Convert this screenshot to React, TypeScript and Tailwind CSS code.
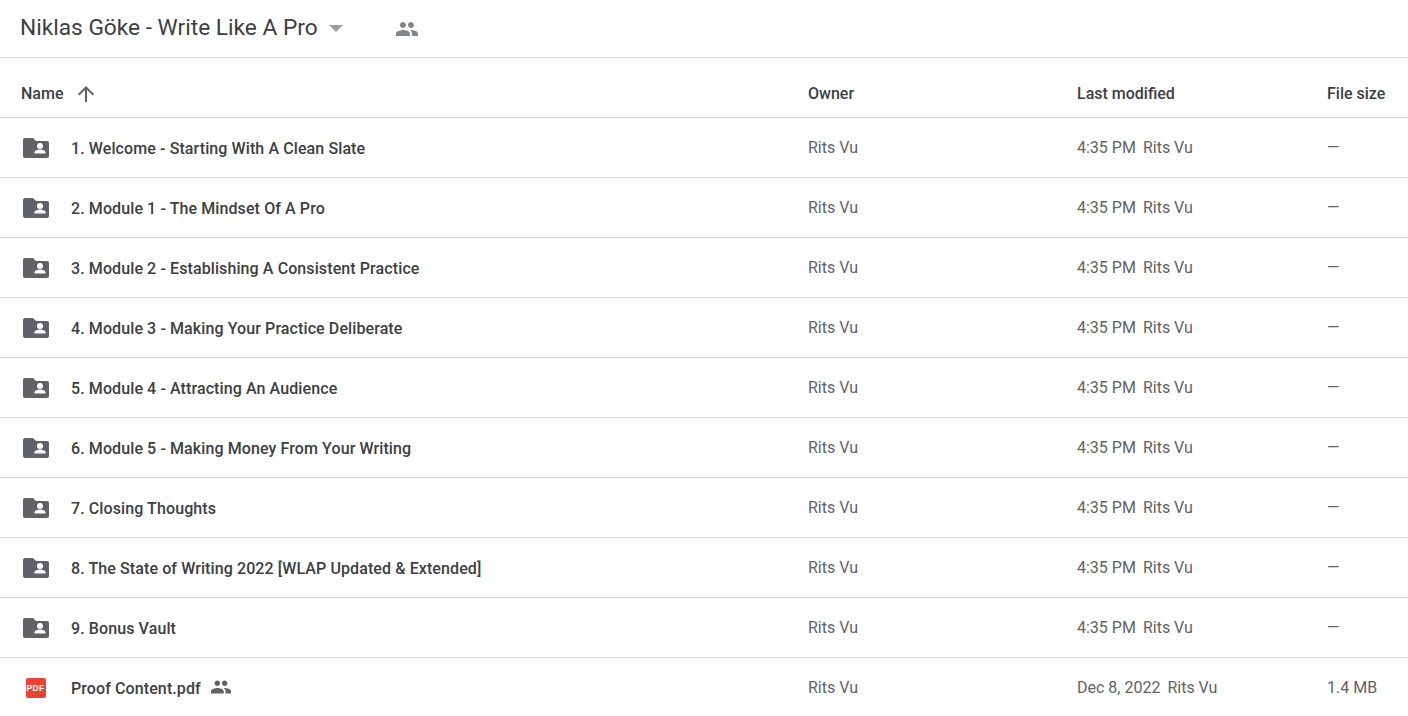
const FOLDERS = [
  '1. Welcome - Starting With A Clean Slate',
  '2. Module 1 - The Mindset Of A Pro',
  '3. Module 2 - Establishing A Consistent Practice',
  '4. Module 3 - Making Your Practice Deliberate',
  '5. Module 4 - Attracting An Audience',
  '6. Module 5 - Making Money From Your Writing',
  '7. Closing Thoughts',
  '8. The State of Writing 2022 [WLAP Updated & Extended]',
  '9. Bonus Vault',
]

const PEOPLE =
  'M16 11c1.66 0 2.99-1.34 2.99-3S17.66 5 16 5c-1.66 0-3 1.34-3 3s1.34 3 3 3zm-8 0c1.66 0 2.99-1.34 2.99-3S9.66 5 8 5C6.34 5 5 6.34 5 8s1.34 3 3 3zm0 2c-2.33 0-7 1.17-7 3.5V19h14v-2.5c0-2.33-4.67-3.5-7-3.5zm8 0c-.29 0-.62.02-.97.05 1.16.84 1.97 1.97 1.97 3.45V19h6v-2.5c0-2.33-4.67-3.5-7-3.5z'

function PeopleIcon({ className }: { className: string }) {
  return (
    <svg viewBox="0 0 24 24" className={className} fill="currentColor">
      <path d={PEOPLE} />
    </svg>
  )
}

function SharedFolderIcon() {
  return (
    <svg viewBox="0 0 26 20" className="h-5 w-[26px] text-[#5f6368]" fill="currentColor">
      <path d="M2 0h8l3 3h11a2 2 0 0 1 2 2v13a2 2 0 0 1-2 2H2a2 2 0 0 1-2-2V2a2 2 0 0 1 2-2z" />
      <circle cx="17" cy="8" r="3" fill="#fff" />
      <path d="M11.500 15.500v-1.200c0-1.900 3.600-2.800 5.500-2.800s5.500.9 5.500 2.800v1.200z" fill="#fff" />
    </svg>
  )
}

function PdfIcon() {
  return (
    <div className="flex h-5 w-5 items-center justify-center rounded-[2px] bg-[#ea4335] font-['Liberation_Sans',sans-serif] text-[8.500px] leading-none font-bold tracking-[0.4px] text-white">
      PDF
    </div>
  )
}

function Row({
  icon,
  name,
  shared,
  modified,
  size,
}: {
  icon: React.ReactNode
  name: string
  shared?: boolean
  modified: string
  size: string
}) {
  return (
    <div className="flex h-[60px] items-center border-b border-[#dadce0] pt-px text-base text-[#5f6368]">
      <div className="flex w-[808px] items-center">
        <div className="flex w-[71px] justify-center">{icon}</div>
        <span className="translate-y-px font-medium tracking-[0.1px] text-[#3c4043]">{name}</span>
        {shared && <PeopleIcon className="mt-[-2px] ml-[9px] h-[22px] w-[22px]" />}
      </div>
      <div className="w-[269px]">Rits Vu</div>
      <div className="flex w-[250px] gap-[7px]">
        <span>{modified}</span>
        <span>Rits Vu</span>
      </div>
      <div>{size}</div>
    </div>
  )
}

export default function App() {
  return (
    <div className="h-[716px] overflow-hidden bg-white font-['Roboto',sans-serif]">
      <header className="flex h-[58px] items-center border-b border-[#dadce0] pl-5">
        <h1 className="text-[22.700px] font-normal text-[#3c4043]">Niklas Göke - Write Like A Pro</h1>
        <svg viewBox="0 0 14 7" className="ml-[11px] h-[7px] w-[14px] text-[#9aa0a6]" fill="currentColor">
          <path d="M0 0h14L7 7z" />
        </svg>
        <PeopleIcon className="ml-[52px] h-[24px] w-[24px] text-[#80868b]" />
      </header>
      <div className="flex h-[60px] items-center border-b border-[#dadce0] pt-3 text-base font-medium text-[#3c4043]">
        <div className="flex w-[808px] items-center pl-[21px]">
          <span>Name</span>
          <svg viewBox="0 0 16 16" className="ml-[15px] h-4 w-4 text-[#5f6368]" fill="currentColor">
            <path d="M7 16V3.800L1.400 9.400 0 8l8-8 8 8-1.400 1.400L9 3.800V16z" />
          </svg>
        </div>
        <div className="w-[269px]">Owner</div>
        <div className="w-[250px]">Last modified</div>
        <div>File size</div>
      </div>
      {FOLDERS.map((name) => (
        <Row key={name} icon={<SharedFolderIcon />} name={name} modified="4:35 PM" size="—" />
      ))}
      <Row icon={<PdfIcon />} name="Proof Content.pdf" shared modified="Dec 8, 2022" size="1.4 MB" />
    </div>
  )
}
